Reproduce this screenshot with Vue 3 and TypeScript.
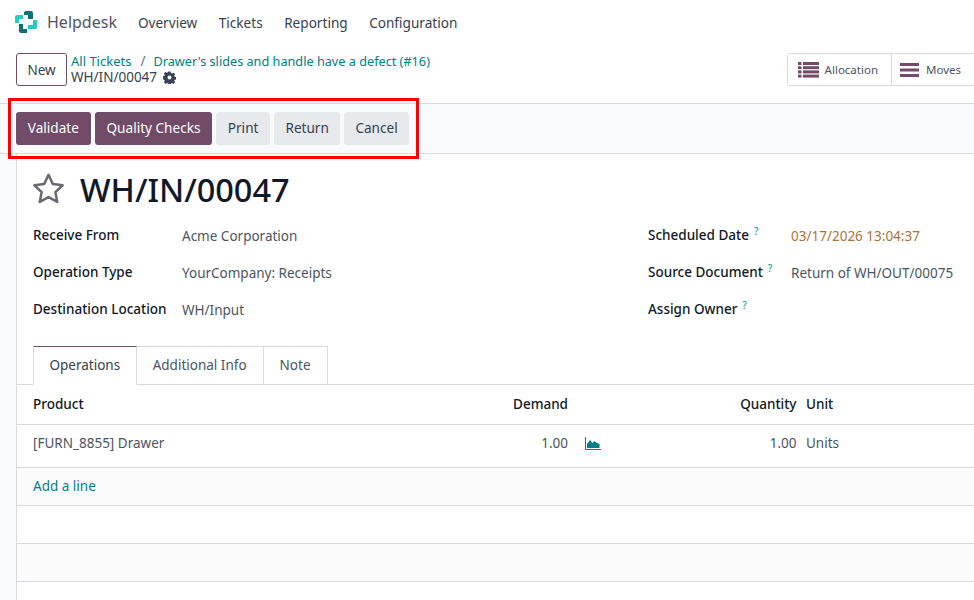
<script setup lang="ts">
const leftFields = [
  { label: 'Receive From', value: 'Acme Corporation' },
  { label: 'Operation Type', value: 'YourCompany: Receipts' },
  { label: 'Destination Location', value: 'WH/Input' },
]
const allocationRows = [0, 4.2, 8.4, 12.6]
</script>

<template>
  <div class="page">
    <nav class="navbar">
      <svg class="logo" viewBox="15 11 22 22" width="22" height="22">
        <path d="M17 15h6v4h-4v4h-4v-6a2 2 0 0 1 2-2z" fill="#1ad1bd" />
        <path d="M26 11h5a2 2 0 0 1 2 2v6h-5v-4h-4v-2a2 2 0 0 1 2-2z" fill="#0f6f75" />
        <path d="M33 20h4v7a2 2 0 0 1-2 2h-7v-4h5z" fill="#1ad1bd" />
        <path d="M19 24h4v5h4v4h-6a2 2 0 0 1-2-2z" fill="#0f6f75" />
      </svg>
      <span class="brand">Helpdesk</span>
      <a class="menu">Overview</a>
      <a class="menu">Tickets</a>
      <a class="menu">Reporting</a>
      <a class="menu">Configuration</a>
    </nav>

    <header class="control">
      <button class="new">New</button>
      <div class="crumbs">
        <div class="crumb-top">
          <a class="first-crumb">All Tickets</a><span class="slash">/</span><a>Drawer's slides and handle have a defect (#16)</a>
        </div>
        <div class="crumb-current">
          WH/IN/00047
          <svg class="gear" viewBox="0 0 16 16" width="13" height="13">
            <path fill="#374151" fill-rule="evenodd" d="M6.600.6h2.800l.4 2 1.300.6 1.800-1.100 2 2-1.100 1.800.6 1.300 2 .4v2.800l-2 .4-.6 1.300 1.100 1.800-2 2-1.800-1.100-1.300.6-.4 2H6.600l-.4-2-1.300-.6-1.800 1.100-2-2 1.100-1.800-.6-1.300-2-.4V6.600l2-.4.6-1.300L1.100 3.100l2-2 1.800 1.100 1.300-.6zM8 5.500a2.500 2.500 0 1 0 0 5 2.500 2.500 0 0 0 0-5z" />
          </svg>
        </div>
      </div>
      <div class="switch">
        <button class="switch-btn first">
          <svg viewBox="0 0 21 16" width="21" height="16">
            <g v-for="y in allocationRows" :key="y" fill="#714b67">
              <rect x="0" :y="y" width="3.500" height="3" />
              <rect x="5" :y="y" width="16" height="3" />
            </g>
          </svg>
          Allocation
        </button>
        <button class="switch-btn">
          <svg viewBox="0 0 19 16" width="19" height="16">
            <g fill="#714b67">
              <rect y="1" width="19" height="3" /><rect y="6.500" width="19" height="3" /><rect y="12" width="19" height="3" />
            </g>
          </svg>
          Moves
        </button>
      </div>
    </header>

    <div class="actions">
      <button class="btn primary">Validate</button>
      <button class="btn primary">Quality Checks</button>
      <button class="btn">Print</button>
      <button class="btn">Return</button>
      <button class="btn">Cancel</button>
    </div>
    <div class="highlight"></div>

    <div class="content">
      <main class="sheet">
        <div class="title">
          <svg class="star" viewBox="0 0 32 32" width="35" height="35">
            <path d="M16 3.500l3.900 8.300 9 1.200-6.600 6.300 1.700 9L16 23.900l-8 4.400 1.700-9L3.100 13l9-1.200z" fill="none" stroke="#6b6873" stroke-width="2.300" stroke-linejoin="round" />
          </svg>
          <h1>WH/IN/00047</h1>
        </div>

        <div class="fields">
          <div class="col-left">
            <div v-for="f in leftFields" :key="f.label" class="field">
              <label>{{ f.label }}</label>
              <span>{{ f.value }}</span>
            </div>
          </div>
          <div class="col-right">
            <div class="field">
              <label>Scheduled Date<sup>?</sup></label>
              <span class="date">03/17/2026 13:04:37</span>
            </div>
            <div class="field">
              <label>Source Document<sup>?</sup></label>
              <span>Return of WH/OUT/00075</span>
            </div>
            <div class="field">
              <label>Assign Owner<sup>?</sup></label>
              <span></span>
            </div>
          </div>
        </div>

        <div class="tabs">
          <a class="tab active">Operations</a>
          <a class="tab">Additional Info</a>
          <a class="tab">Note</a>
        </div>

        <div class="table">
          <div class="row head">
            <span class="c-product">Product</span>
            <span class="c-demand">Demand</span>
            <span class="c-icon"></span>
            <span class="c-qty">Quantity</span>
            <span class="c-unit">Unit</span>
          </div>
          <div class="row body">
            <span class="c-product">[FURN_8855] Drawer</span>
            <span class="c-demand">1.00</span>
            <span class="c-icon">
              <svg viewBox="0 0 16 13" width="16" height="13">
                <path d="M0.500 0v12.500H16" fill="none" stroke="#017e84" stroke-width="1" />
                <path d="M2 11V7l3-4 2.500 3 2-2 2.500 2 2.500 1v4z" fill="#017e84" />
              </svg>
            </span>
            <span class="c-qty">1.00</span>
            <span class="c-unit">Units</span>
          </div>
          <div class="row add"><a>Add a line</a></div>
          <div class="row blank"></div>
          <div class="row blank alt"></div>
        </div>
      </main>
    </div>
  </div>
</template>

<style>
html, body { margin: 0; background: #fff; }
</style>

<style scoped>
.page {
  position: relative;
  width: 974px;
  height: 600px;
  overflow: hidden;
  font-family: "Noto Sans", "Open Sans", sans-serif;
  font-size: 13.500px;
  color: #374151;
  background: #fff;
}
button { font: inherit; cursor: pointer; }
.navbar {
  height: 44px;
  padding-left: 15px;
  display: flex;
  align-items: center;
}
.logo { margin-right: 10px; }
.brand { font-size: 16px; color: #4f5563; margin-right: 21px; }
.menu { color: #374151; margin-right: 21.500px; font-size: 13.600px; }
.control {
  height: 60px;
  box-sizing: border-box;
  display: flex;
  align-items: flex-start;
  padding: 9px 0 0 16px;
  border-bottom: 1px solid #d8dadd;
}
.new {
  width: 51px;
  height: 33px;
  padding: 0;
  background: #fff;
  border: 1px solid #714b67;
  border-radius: 3px;
  color: #374151;
}
.crumbs { margin-left: 4px; line-height: 16px; }
.crumb-top a { color: #017e84; font-size: 12.700px; }
.crumb-top a.first-crumb { font-size: 13px; }
.slash { margin: 0 8px 0 9px; color: #6b7280; }
.crumb-current { display: flex; align-items: center; gap: 6px; }
.switch {
  margin-left: auto;
  display: flex;
  height: 33px;
  margin-right: -1px;
  box-sizing: border-box;
  border: 1px solid #d8dadd;
  border-right: none;
  border-radius: 4px 0 0 4px;
}
.switch-btn {
  display: flex;
  align-items: center;
  gap: 7px;
  padding: 0 14px 0 8px;
  background: #fff;
  border: none;
  color: #4b5563;
  font-size: 11.500px;
}
.switch-btn.first { border-right: 1px solid #d8dadd; padding: 0 13px 0 10px; gap: 6px; }
.actions {
  height: 50px;
  box-sizing: border-box;
  display: flex;
  align-items: flex-start;
  gap: 4px;
  padding: 8px 0 0 16px;
  background: #f9fafb;
  border-bottom: 1px solid #d8dadd;
}
.btn {
  height: 33px;
  padding: 0 11.500px 2px;
  background: #e7e9ed;
  border: none;
  border-radius: 3px;
  color: #374151;
  font-size: 13.600px;
}
.btn.primary { background: #714b67; color: #fff; padding: 0 11.800px 2px; }
.btn:last-child { padding: 0 11px 2px; }
.highlight {
  position: absolute;
  left: 8px;
  top: 98px;
  width: 411px;
  height: 61px;
  box-sizing: border-box;
  border: 3px solid #f00;
}
.content {
  height: 446px;
  padding-left: 16px;
  background: #f9fafb;
}
.sheet {
  height: 100%;
  box-sizing: border-box;
  padding-top: 16px;
  background: #fff;
  border-left: 1px solid #d8dadd;
}
.title { display: flex; align-items: center; height: 40px; padding-left: 14px; }
.star { margin-right: 14px; margin-top: -3px; }
h1 { margin: 0; font-size: 32.500px; font-weight: 500; color: #111827; line-height: 40px; }
.fields { display: flex; margin-top: 17px; padding-left: 16px; }
.col-left { width: 615px; }
.field { display: flex; height: 37px; }
.field label {
  position: relative;
  top: -1px;
  font-weight: 500;
  color: #111827;
  white-space: nowrap;
}
.col-left .field label { width: 149px; }
.col-right .field label { width: 143px; }
.field span { color: #4b5563; }
sup {
  margin-left: 5px;
  font-size: 10px;
  line-height: 0;
  color: #1a9ab0;
}
.field span.date { color: #a9743c; }
.tabs {
  display: flex;
  margin-top: 8px;
  height: 39px;
  padding-left: 16px;
  box-sizing: border-box;
  border-bottom: 1px solid #d8dadd;
}
.tab {
  box-sizing: border-box;
  height: 39px;
  display: flex;
  align-items: center;
  padding: 0 16px 2px;
  border: 1px solid #d8dadd;
  border-left: none;
  color: #4b5563;
}
.tab.active {
  background: #fff;
  border-left: 1px solid #d8dadd;
  border-bottom-color: #fff;
  border-top-color: #714b67;
  color: #374151;
  padding: 0 15.500px 2px;
}
.row {
  display: flex;
  align-items: center;
  box-sizing: border-box;
  padding-left: 16px;
  border-bottom: 1px solid #d8dadd;
}
.head { height: 40px; padding-bottom: 2px; font-weight: 500; color: #111827; }
.body { height: 43px; padding-bottom: 6px; color: #4b5563; }
.add { height: 38px; padding-bottom: 2px; background: #fbfbfb; color: #017e84; }
.blank { height: 38px; }
.alt { background: #fbfbfb; }
.c-product { width: 440px; }
.c-demand { width: 95px; text-align: right; }
.c-icon { width: 114px; padding-left: 17px; box-sizing: border-box; display: flex; }
.c-qty { width: 114.500px; text-align: right; }
.c-unit { padding-left: 9.500px; }
</style>
